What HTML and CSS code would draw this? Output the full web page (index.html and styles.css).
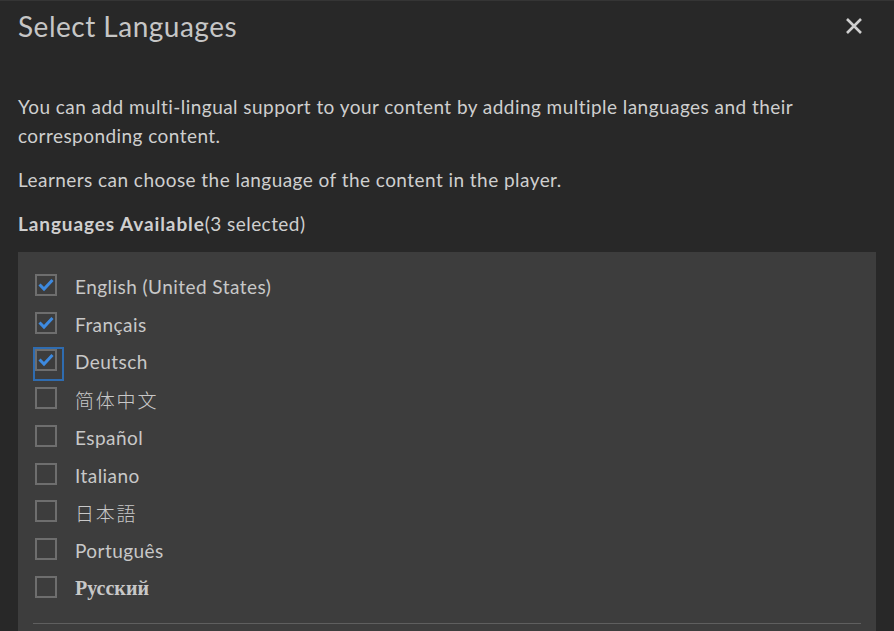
FILE: index.html
```html
<!DOCTYPE html>
<html>
<head>
<meta charset="utf-8">
<link rel="stylesheet" href="styles.css">
</head>
<body>
<div class="dialog">
  <div class="header">
    <h1 class="title">Select Languages</h1>
    <button class="close" aria-label="Close">
      <svg width="16" height="16" viewBox="0 0 16 16"><path d="M1 1 L15 15 M15 1 L1 15" stroke="#cfcfcf" stroke-width="2.6" stroke-linecap="butt"/></svg>
    </button>
  </div>
  <p class="text first">You can add multi-lingual support to your content by adding multiple languages and their corresponding content.</p>
  <p class="text">Learners can choose the language of the content in the player.</p>
  <p class="text label"><b>Languages Available</b>(3 selected)</p>
  <div class="panel">
    <ul class="list">
      <li class="row"><span class="box checked"><svg viewBox="0 0 22 22"><path d="M4.5 10.5 L9 15 L17.5 6" /></svg></span><span class="name">English (United States)</span></li>
      <li class="row"><span class="box checked"><svg viewBox="0 0 22 22"><path d="M4.5 10.5 L9 15 L17.5 6" /></svg></span><span class="name">Français</span></li>
      <li class="row"><span class="box checked focus"><svg viewBox="0 0 22 22"><path d="M4.5 10.5 L9 15 L17.5 6" /></svg></span><span class="name">Deutsch</span></li>
      <li class="row"><span class="box"></span><span class="name cjk" lang="zh-CN">简体中文</span></li>
      <li class="row"><span class="box"></span><span class="name">Español</span></li>
      <li class="row"><span class="box"></span><span class="name">Italiano</span></li>
      <li class="row"><span class="box"></span><span class="name cjk" lang="ja">日本語</span></li>
      <li class="row"><span class="box"></span><span class="name">Português</span></li>
      <li class="row"><span class="box"></span><span class="name serif">Русский</span></li>
    </ul>
    <div class="sep"></div>
  </div>
</div>
</body>
</html>
```
FILE: styles.css
```css
html, body {
  margin: 0;
  padding: 0;
  height: 100%;
  overflow: hidden;
}
body {
  background: #282828;
  border-top: 1px solid #353535;
  font-family: "Lato", "Noto Sans CJK SC", sans-serif;
  color: #cfcfcf;
}
.dialog {
  padding: 0 18px;
}
.header {
  display: flex;
  align-items: center;
  justify-content: space-between;
  height: 49px;
}
.title {
  margin: 0;
  font-weight: 400;
  font-size: 28px;
  letter-spacing: 0.5px;
  color: #c6c6c6;
}
.close {
  background: none;
  border: 0;
  padding: 0;
  margin-right: 14px;
  margin-top: 1px;
  width: 16px;
  height: 16px;
  display: flex;
}
.text {
  margin: 15px 0 0;
  font-size: 19px;
  letter-spacing: 0.45px;
  line-height: 29px;
  max-width: 820px;
}
.text.first {
  margin-top: 42px;
}
.text b {
  font-weight: 700;
  letter-spacing: 0.9px;
}
.panel {
  margin-top: 14px;
  background: #3d3d3d;
  padding: 14px 15px 0;
  height: 400px;
}
.list {
  list-style: none;
  margin: 0;
  padding: 0 0 17px;
}
.row {
  display: flex;
  align-items: center;
  height: 37.75px;
}
.box {
  box-sizing: border-box;
  width: 22px;
  height: 22px;
  margin-left: 2px;
  border: 2px solid #6e6e6e;
  position: relative;
  flex: none;
}
.box svg {
  position: absolute;
  left: -2px;
  top: -2px;
  width: 22px;
  height: 22px;
}
.box path {
  fill: none;
  stroke: #3d8ae0;
  stroke-width: 3;
}
.box.focus::after {
  content: "";
  position: absolute;
  left: -4px;
  top: -4px;
  width: 31px;
  height: 34px;
  border: 2px solid #2f6cb0;
  box-sizing: border-box;
}
.name {
  margin-left: 18px;
  font-size: 19px;
  letter-spacing: 0.45px;
  color: #c8c8c8;
  padding-top: 3px;
}
.cjk {
  font-family: "Noto Sans CJK SC", sans-serif;
  font-weight: 300;
  letter-spacing: 1.8px;
}
.serif {
  font-family: "Liberation Serif", "DejaVu Serif", serif;
  font-weight: 700;
  font-size: 20px;
  letter-spacing: 0;
}
.sep {
  height: 1px;
  background: #5f5f5f;
}
```
